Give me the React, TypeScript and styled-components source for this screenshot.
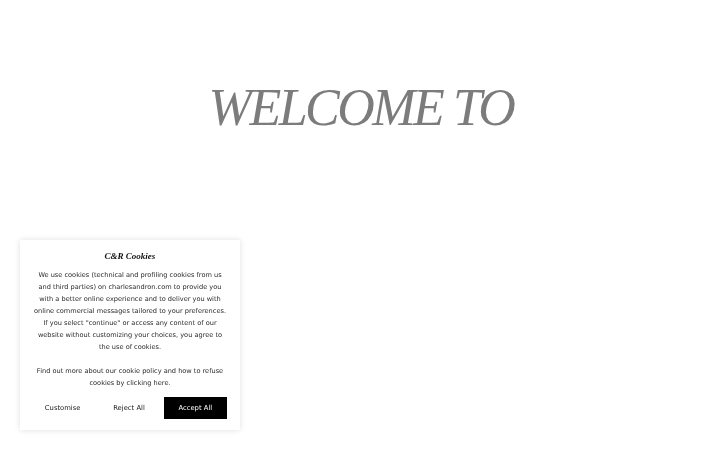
import React from "react";
import styled, { createGlobalStyle } from "styled-components";

const Global = createGlobalStyle`
  html, body { margin: 0; padding: 0; background: #fff; }
  body { width: 720px; height: 450px; overflow: hidden; font-family: "DejaVu Sans", Arial, sans-serif; }
`;

const Page = styled.main`
  width: 720px;
  height: 450px;
  display: flex;
  justify-content: center;
  padding-top: 78px;
  box-sizing: border-box;
`;

const Welcome = styled.h1`
  margin: 0;
  font-family: "Liberation Serif", "Times New Roman", serif;
  font-style: italic;
  font-weight: 400;
  font-size: 52px;
  line-height: 60px;
  letter-spacing: -2.5px;
  color: #7c7c7c;
  height: 60px;
  padding-left: 2px;
`;

const Banner = styled.section`
  position: fixed;
  left: 20px;
  bottom: 20px;
  width: 220px;
  box-sizing: border-box;
  background: #fff;
  box-shadow: 0 0 6px rgba(0, 0, 0, 0.13);
  padding: 9px 8px 11px;
  display: flex;
  flex-direction: column;
  align-items: center;
  text-align: center;
`;

const Title = styled.h2`
  margin: 0 0 6px;
  font-family: "Liberation Serif", "Times New Roman", serif;
  font-style: italic;
  font-weight: 700;
  font-size: 9px;
  line-height: 14px;
  color: #111;
`;

const Body = styled.p`
  margin: 0;
  font-family: "DejaVu Sans", sans-serif;
  font-size: 6.6px;
  line-height: 12px;
  color: #2a2a2a;
  white-space: nowrap;
`;

const Spacer = styled.div`
  height: 12px;
`;

const Actions = styled.div`
  margin-top: 8px;
  width: 100%;
  padding: 0 5px 0 3px;
  box-sizing: border-box;
  display: grid;
  grid-template-columns: 1fr 1fr 1fr;
  gap: 3px;
  align-items: center;
`;

const Btn = styled.button<{ $primary?: boolean }>`
  height: 22px;
  border: none;
  background: ${(p) => (p.$primary ? "#000" : "transparent")};
  color: ${(p) => (p.$primary ? "#fff" : "#222")};
  font-family: "DejaVu Sans", sans-serif;
  font-size: 6.8px;
  padding: 0;
  cursor: pointer;
`;

export default function App() {
  return (
    <>
      <Global />
      <Page>
        <Welcome>WELCOME TO</Welcome>
      </Page>
      <Banner>
        <Title>C&amp;R Cookies</Title>
        <Body>
          We use cookies (technical and profiling cookies from us
          <br />
          and third parties) on charlesandron.com to provide you
          <br />
          with a better online experience and to deliver you with
          <br />
          online commercial messages tailored to your preferences.
          <br />
          If you select "continue" or access any content of our
          <br />
          website without customizing your choices, you agree to
          <br />
          the use of cookies.
        </Body>
        <Spacer />
        <Body>
          Find out more about our cookie policy and how to refuse
          <br />
          cookies by clicking here.
        </Body>
        <Actions>
          <Btn>Customise</Btn>
          <Btn>Reject All</Btn>
          <Btn $primary>Accept All</Btn>
        </Actions>
      </Banner>
    </>
  );
}
